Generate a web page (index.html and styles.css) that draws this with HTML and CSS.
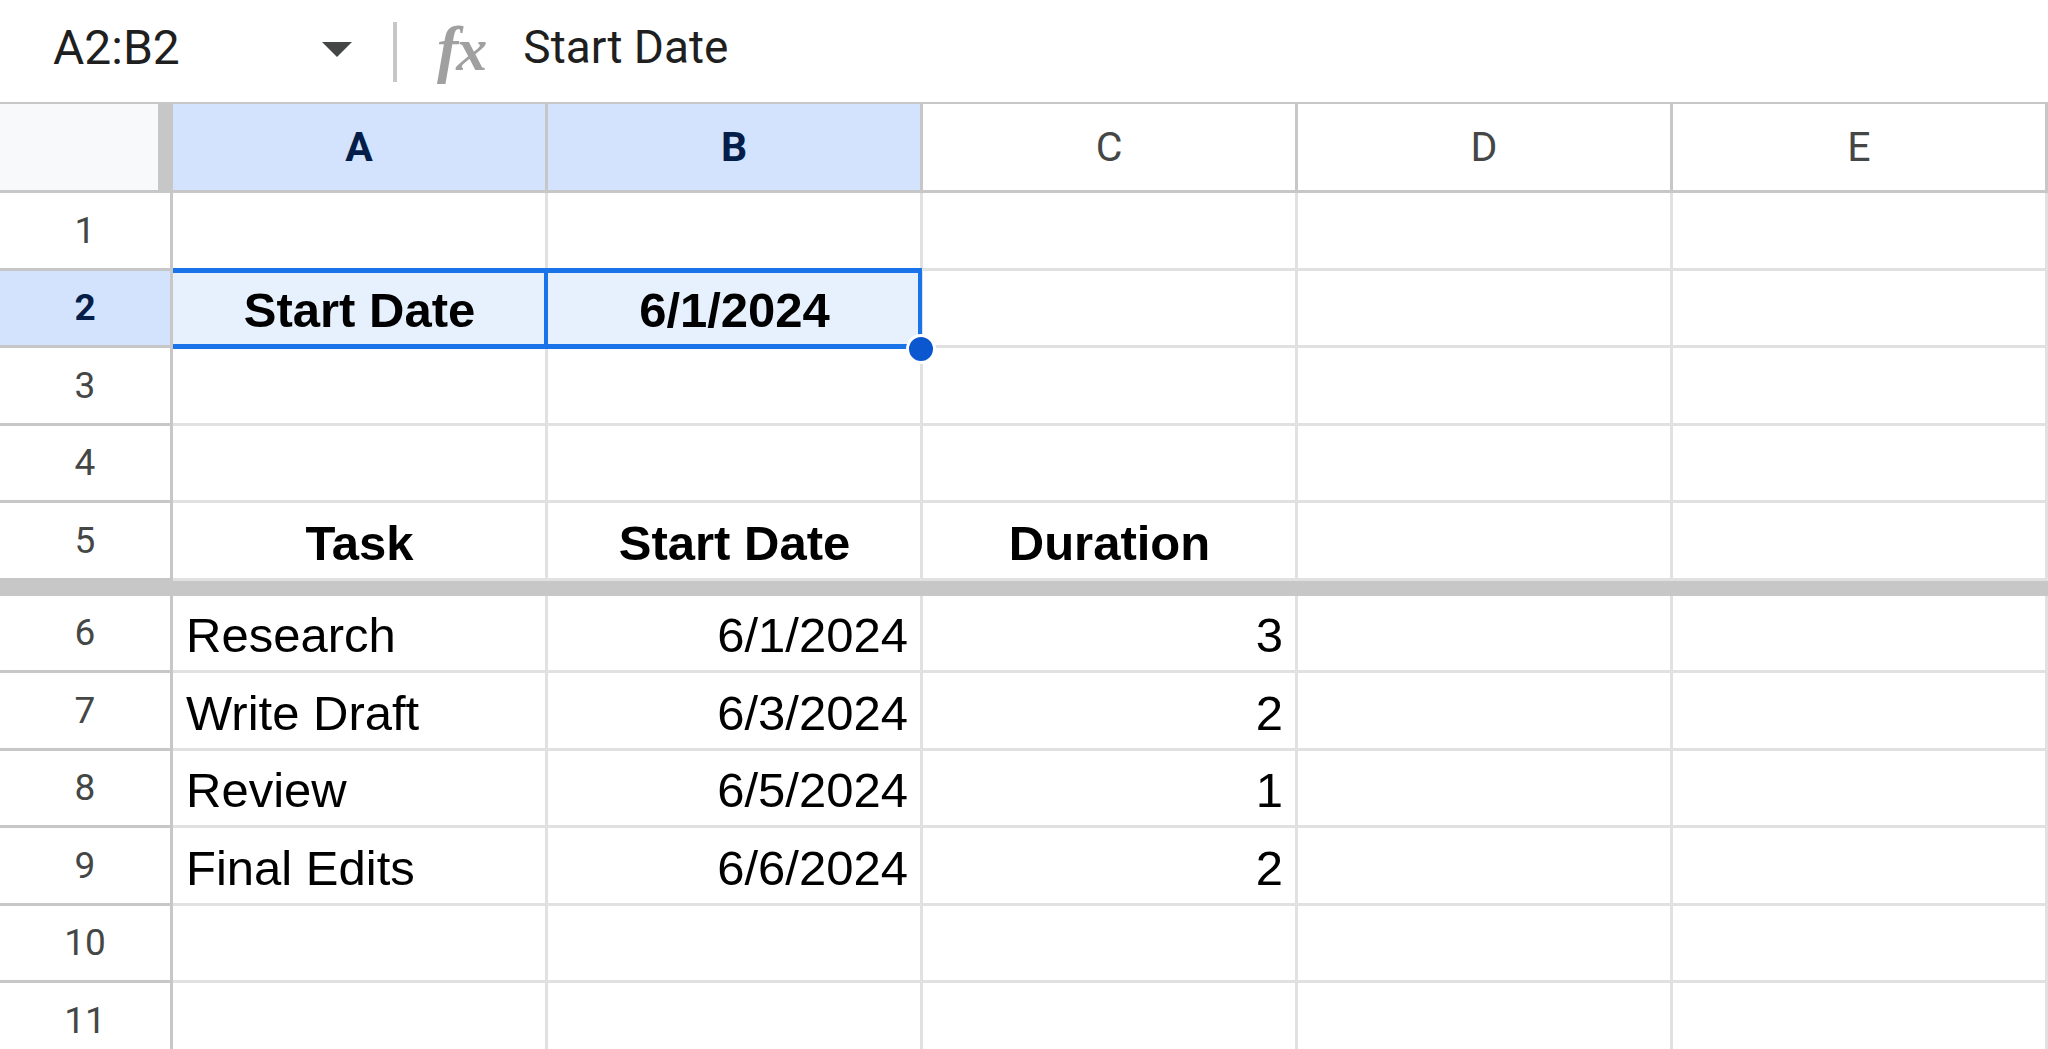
FILE: index.html
```html
<!DOCTYPE html>
<html>
<head>
<meta charset="utf-8">
<link rel="stylesheet" href="styles.css">
</head>
<body>
<div class="formula-bar">
  <div class="name-box">
    <span class="name">A2:B2</span>
    <svg class="caret" width="30" height="15" viewBox="0 0 30 15"><path d="M0 0 L30 0 L15 15 Z" fill="#444746"/></svg>
  </div>
  <div class="sep"></div>
  <span class="fx"><span class="fx-f">f</span><span class="fx-x">x</span></span>
  <span class="formula">Start Date</span>
</div>

<div class="sheet">
  <div class="hdr-row">
    <div class="corner"></div>
    <div class="freeze-v"></div>
    <div class="col-h on">A</div>
    <div class="col-h on">B</div>
    <div class="col-h">C</div>
    <div class="col-h">D</div>
    <div class="col-h">E</div>
  </div>

  <div class="row">
    <div class="row-h">1</div>
    <div class="cell"></div><div class="cell"></div><div class="cell"></div><div class="cell"></div><div class="cell"></div>
  </div>
  <div class="row">
    <div class="row-h on">2</div>
    <div class="cell sel c b">Start Date</div><div class="cell sel c b">6/1/2024</div><div class="cell"></div><div class="cell"></div><div class="cell"></div>
  </div>
  <div class="row">
    <div class="row-h">3</div>
    <div class="cell"></div><div class="cell"></div><div class="cell"></div><div class="cell"></div><div class="cell"></div>
  </div>
  <div class="row">
    <div class="row-h">4</div>
    <div class="cell"></div><div class="cell"></div><div class="cell"></div><div class="cell"></div><div class="cell"></div>
  </div>
  <div class="row">
    <div class="row-h">5</div>
    <div class="cell c b">Task</div><div class="cell c b">Start Date</div><div class="cell c b">Duration</div><div class="cell"></div><div class="cell"></div>
  </div>

  <div class="freeze-h"></div>

  <div class="row">
    <div class="row-h">6</div>
    <div class="cell">Research</div><div class="cell r">6/1/2024</div><div class="cell r">3</div><div class="cell"></div><div class="cell"></div>
  </div>
  <div class="row">
    <div class="row-h">7</div>
    <div class="cell">Write Draft</div><div class="cell r">6/3/2024</div><div class="cell r">2</div><div class="cell"></div><div class="cell"></div>
  </div>
  <div class="row">
    <div class="row-h">8</div>
    <div class="cell">Review</div><div class="cell r">6/5/2024</div><div class="cell r">1</div><div class="cell"></div><div class="cell"></div>
  </div>
  <div class="row">
    <div class="row-h">9</div>
    <div class="cell">Final Edits</div><div class="cell r">6/6/2024</div><div class="cell r">2</div><div class="cell"></div><div class="cell"></div>
  </div>
  <div class="row">
    <div class="row-h">10</div>
    <div class="cell"></div><div class="cell"></div><div class="cell"></div><div class="cell"></div><div class="cell"></div>
  </div>
  <div class="row">
    <div class="row-h">11</div>
    <div class="cell"></div><div class="cell"></div><div class="cell"></div><div class="cell"></div><div class="cell"></div>
  </div>

  <div class="selection">
    <div class="active"></div>
  </div>
  <div class="handle"></div>
</div>
</body>
</html>
```

FILE: styles.css
```css
html, body {
  margin: 0;
  padding: 0;
  background: #ffffff;
}
body {
  width: 2048px;
  height: 1049px;
  overflow: hidden;
  font-family: "Liberation Sans", Arial, sans-serif;
}

/* formula bar */
.formula-bar {
  height: 102px;
  display: flex;
  align-items: center;
  box-sizing: border-box;
}
.name-box {
  width: 393px;
  box-sizing: border-box;
  padding-left: 53px;
  padding-right: 41px;
  display: flex;
  align-items: center;
}
.name {
  font-family: Roboto, "Liberation Sans", sans-serif;
  font-size: 48px;
  color: #1f1f1f;
  margin-bottom: 7px;
}
.caret {
  margin-left: auto;
  margin-bottom: 4px;
  display: block;
}
.sep {
  width: 4px;
  height: 60px;
  background: #c7c7c7;
  margin-top: 2px;
}
.fx {
  margin-left: 40px;
  font-family: "Liberation Serif", "DejaVu Serif", serif;
  font-style: italic;
  font-weight: bold;
  color: #a0a0a0;
  line-height: 1;
  margin-bottom: 4px;
  letter-spacing: -2px;
}
.fx-f {
  font-size: 64px;
}
.fx-x {
  font-size: 62px;
}
.formula {
  margin-left: 38px;
  font-family: Roboto, "Liberation Sans", sans-serif;
  font-size: 46px;
  color: #1f1f1f;
  margin-bottom: 8px;
}

/* sheet */
.sheet {
  position: relative;
}
.hdr-row {
  display: flex;
  height: 91px;
  box-sizing: border-box;
  border-top: 2px solid #c7c7c7;
  border-bottom: 3px solid #c7c7c7;
}
.corner {
  width: 158px;
  flex: none;
  background: #f8f9fa;
}
.freeze-v {
  width: 15px;
  flex: none;
  background: #c7c7c7;
}
.col-h {
  width: 375px;
  flex: none;
  box-sizing: border-box;
  border-right: 3px solid #c7c7c7;
  display: flex;
  align-items: center;
  justify-content: center;
  font-family: Roboto, "Liberation Sans", sans-serif;
  font-size: 41px;
  color: #444746;
}
.col-h.on {
  background: #d3e3fd;
  color: #041e49;
  font-weight: bold;
}

.row {
  display: flex;
  height: 77.5px;
}
.row-h {
  width: 173px;
  flex: none;
  box-sizing: border-box;
  border-right: 3px solid #c7c7c7;
  border-bottom: 3px solid #c7c7c7;
  display: flex;
  align-items: center;
  justify-content: center;
  font-family: Roboto, "Liberation Sans", sans-serif;
  font-size: 37px;
  color: #444746;
}
.row-h.on {
  background: #d3e3fd;
  color: #041e49;
  font-weight: bold;
}
.cell {
  width: 375px;
  flex: none;
  box-sizing: border-box;
  border-right: 3px solid #e1e1e1;
  border-bottom: 3px solid #e1e1e1;
  display: flex;
  align-items: center;
  padding: 5px 12px 0 13px;
  font-size: 49px;
  color: #000000;
  white-space: nowrap;
  overflow: hidden;
}
.cell.c { justify-content: center; }
.cell.r { justify-content: flex-end; }
.cell.b { font-weight: bold; }
.cell.sel { background: #e7f0fd; }

.freeze-h {
  height: 15px;
  background: #c7c7c7;
}

/* selection overlay */
.selection {
  position: absolute;
  left: 173px;
  top: 166px;
  width: 749px;
  height: 81px;
  box-sizing: border-box;
  border-top: 5px solid #1a73e8;
  border-bottom: 5px solid #1a73e8;
  border-right: 4px solid #1a73e8;
  display: flex;
}
.active {
  width: 375px;
  box-sizing: border-box;
  border-right: 4px solid #1a73e8;
}
.handle {
  position: absolute;
  left: 906px;
  top: 232px;
  width: 24px;
  height: 24px;
  border-radius: 50%;
  background: #0b57d0;
  border: 3px solid #ffffff;
}
```
